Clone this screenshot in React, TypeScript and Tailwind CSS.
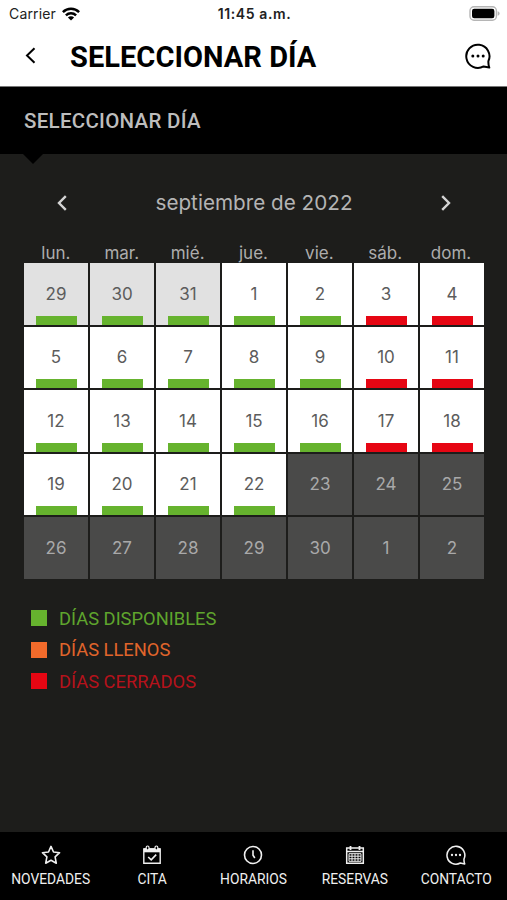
import React from 'react';

type DayStatus = 'available' | 'full' | 'closed' | 'disabled';

interface Day {
  label: number;
  status: DayStatus;
  outside?: boolean;
}

const WEEKDAYS = ['lun.', 'mar.', 'mié.', 'jue.', 'vie.', 'sáb.', 'dom.'];

const makeDay = (index: number): Day => {
  // The grid starts on monday, august 29
  const label = index < 3 ? 29 + index : index < 33 ? index - 2 : index - 32;
  if (index >= 25) return { label, status: 'disabled' };
  return { label, status: index % 7 > 4 ? 'closed' : 'available', outside: index < 3 };
};

const DAYS: Day[] = Array.from({ length: 35 }, (_, i) => makeDay(i));

const LEGEND = [
  { label: 'DÍAS DISPONIBLES', box: 'bg-[#66b32e]', text: 'text-[#5fa52d]' },
  { label: 'DÍAS LLENOS', box: 'bg-[#f36b2b]', text: 'text-[#e0652b]' },
  { label: 'DÍAS CERRADOS', box: 'bg-[#e60613]', text: 'text-[#b5121b]' },
];

const ChatIcon = ({ className }: { className: string }) => (
  <svg viewBox="0 0 26 26" className={className} fill="none" stroke="currentColor" strokeWidth="2">
    <path d="M24.3 24.6L18.6 23.4A11.6 11.6 0 1 1 23.4 18.2Q23.2 22 24.3 24.6Z" strokeLinejoin="round" />
    <g fill="currentColor" stroke="none">
      <circle cx="7.8" cy="13" r="1.5" />
      <circle cx="13" cy="13" r="1.5" />
      <circle cx="18.2" cy="13" r="1.5" />
    </g>
  </svg>
);

const StarIcon = () => (
  <svg viewBox="0 0 20 20" className="size-5" fill="none" stroke="currentColor" strokeWidth="1.6" strokeLinejoin="round">
    <path d="M10 1.4l2.5 5.6 6.1.7-4.5 4.2 1.2 6.3L10 15.2l-5.3 3 1.2-6.3L1.4 7.7l6.1-.7z" />
  </svg>
);

const CheckCalendarIcon = () => (
  <svg viewBox="0 0 20 20" className="size-5" fill="none" stroke="currentColor" strokeWidth="1.4">
    <path d="M1.8 4h16.4v14.3H1.8z" />
    <path d="M1.8 3.3h16.4v4H1.8z" fill="currentColor" stroke="none" />
    <rect x="4.2" y="1" width="2.8" height="4" rx="1.4" fill="#000" strokeWidth="1.2" />
    <rect x="13" y="1" width="2.8" height="4" rx="1.4" fill="#000" strokeWidth="1.2" />
    <path d="M6.2 12l3 2.8 5-5.2" strokeWidth="1.6" />
  </svg>
);

const ClockIcon = () => (
  <svg viewBox="0 0 20 20" className="size-5" fill="none" stroke="currentColor" strokeWidth="1.6">
    <circle cx="10" cy="10" r="8.5" />
    <path d="M10 5.2v5l1.8 2.8" />
  </svg>
);

const GridCalendarIcon = () => (
  <svg viewBox="0 0 20 20" className="size-5" fill="none" stroke="currentColor" strokeWidth="1.5">
    <path d="M1.7 3h16.6v15.3H1.7zM1.7 6.5h16.6" />
    <path d="M5.5 1v4M14.5 1v4" strokeWidth="1.8" />
    <path d="M4 8.7h12v7.6H4zM4 11.2h12M4 13.8h12M7 8.7v7.6M10 8.7v7.6M13 8.7v7.6" strokeWidth="1" />
  </svg>
);

const NAV = [
  { label: 'NOVEDADES', icon: <StarIcon /> },
  { label: 'CITA', icon: <CheckCalendarIcon /> },
  { label: 'HORARIOS', icon: <ClockIcon /> },
  { label: 'RESERVAS', icon: <GridCalendarIcon /> },
  { label: 'CONTACTO', icon: <ChatIcon className="size-5" /> },
];

const StatusBar = () => (
  <div className="grid h-[27px] grid-cols-3 items-center pl-[9px] pr-[7px] font-['Inter',sans-serif] text-[14px] text-[#222]">
    <div className="flex items-center gap-[6px]">
      <span className="tracking-[0.15px]">Carrier</span>
      <svg viewBox="0 0 18 14" className="h-[14px] w-[18px]" fill="none" stroke="#000" strokeWidth="2.5">
        <path d="M0.9 5.1A11.6 11.6 0 0 1 17.1 5.1" />
        <path d="M3.9 8.4A7.4 7.4 0 0 1 14.1 8.4" />
        <path d="M9 13.6L5.9 10.5A4.4 4.4 0 0 1 12.1 10.5Z" fill="#000" stroke="none" />
      </svg>
    </div>
    <span className="text-center font-semibold tracking-[0.6px] whitespace-nowrap">11:45 a.m.</span>
    <svg viewBox="0 0 31 15" className="h-[15px] w-[31px] justify-self-end">
      <rect x="1" y="0.8" width="26.4" height="13.4" rx="4" fill="#fff" stroke="#b5b5b5" strokeWidth="1.4" />
      <rect x="3" y="2.8" width="22.4" height="9.4" rx="2.2" fill="#000" />
      <path d="M28.6 5.2q2 .6 2 2.3t-2 2.3z" fill="#b5b5b5" />
    </svg>
  </div>
);

const DayCell: React.FC<{ day: Day }> = ({ day }) => {
  if (day.status === 'disabled') {
    return <div className="flex items-center justify-center bg-[#4a4a49] pt-px text-[#a9a9a9]">{day.label}</div>;
  }
  return (
    <div className={`flex flex-col items-center text-[#5c5c5c] ${day.outside ? 'bg-[#e1e1e1]' : 'bg-white'}`}>
      <span className="flex flex-1 items-center pt-[10px]">{day.label}</span>
      <span className={`h-[9px] w-[41px] ${day.status === 'closed' ? 'bg-[#e60613]' : 'bg-[#66b32e]'}`} />
    </div>
  );
};

const App: React.FC = () => {
  return (
    <div className="flex h-[900px] w-[507px] flex-col overflow-hidden bg-[#1d1d1b] font-['Roboto',sans-serif]">
      <header className="h-[87px] shrink-0 border-b border-[#777] bg-white text-black">
        <StatusBar />
        <div className="flex h-[57px] items-center pl-[25px] pr-4">
          <svg viewBox="0 0 11 17" className="h-[17px] w-[11px]" fill="none" stroke="currentColor" strokeWidth="2">
            <path d="M9.5 1.2L2 8.5l7.5 7.3" />
          </svg>
          <h1 className="ml-[34px] flex-1 pt-[4px] text-[29px] font-bold tracking-[0.05px] whitespace-nowrap">
            SELECCIONAR DÍA
          </h1>
          <ChatIcon className="size-[26px]" />
        </div>
      </header>

      <div className="relative flex h-[67px] shrink-0 items-center bg-black pl-6">
        <h2 className="pt-[2px] text-[20.5px] font-medium tracking-[0.28px] text-[#bdbdbd]">SELECCIONAR DÍA</h2>
        <svg viewBox="0 0 20 10" className="absolute top-full left-[23px] h-[10px] w-5">
          <path d="M0 0h20L10 10z" />
        </svg>
      </div>

      <main className="flex-1 pr-[23px] pl-6 font-['Inter',sans-serif]">
        <div className="mt-[35px] flex h-7 items-center justify-between px-[32px] text-[#b4b4b4]">
          <svg viewBox="0 0 12 16" className="h-4 w-3" fill="none" stroke="#d4d4d4" strokeWidth="2.4">
            <path d="M9.8 1.2L3 8l6.8 6.8" />
          </svg>
          <span className="text-[20.7px]">septiembre de 2022</span>
          <svg viewBox="0 0 12 16" className="h-4 w-3" fill="none" stroke="#d4d4d4" strokeWidth="2.4">
            <path d="M2.2 1.2L9 8l-6.8 6.8" />
          </svg>
        </div>
        <div className="mt-[26px] grid h-5 grid-cols-7 gap-x-0.5 pr-px text-center text-[17px] leading-5 text-[#adadad]">
          {WEEKDAYS.map((name) => (
            <span key={name}>{name}</span>
          ))}
        </div>
        <div className="grid auto-rows-[61.5px] grid-cols-7 gap-0.5 text-[17px]">
          {DAYS.map((day, i) => (
            <DayCell key={i} day={day} />
          ))}
        </div>
        <ul className="mt-[24px] pl-[7px] font-['Roboto',sans-serif] text-[18.35px]">
          {LEGEND.map((item) => (
            <li key={item.label} className={`flex h-[31.5px] items-center gap-3 ${item.text}`}>
              <span className={`size-4 ${item.box}`} />
              <span className="pt-px">{item.label}</span>
            </li>
          ))}
        </ul>
      </main>

      <nav className="grid h-[68px] shrink-0 grid-cols-5 bg-black text-[13.8px] text-[#f0f0f0]">
        {NAV.map((item) => (
          <div key={item.label} className="flex flex-col items-center pt-[13px]">
            {item.icon}
            <span className="mt-1 leading-5">{item.label}</span>
          </div>
        ))}
      </nav>
    </div>
  );
};

export default App;
